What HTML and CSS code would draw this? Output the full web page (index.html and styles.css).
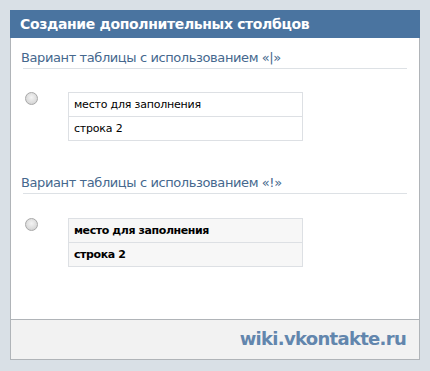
FILE: index.html
```html
<!DOCTYPE html>
<html lang="ru">
<head>
<meta charset="utf-8">
<link rel="stylesheet" href="styles.css">
</head>
<body>
<div class="panel">
  <div class="header">Создание дополнительных столбцов</div>
  <div class="content">
    <div class="section">
      <div class="heading">Вариант таблицы с использованием «|»</div>
      <div class="example">
        <span class="radio"></span>
        <table class="tbl">
          <tr><td>место для заполнения</td></tr>
          <tr><td>строка 2</td></tr>
        </table>
      </div>
    </div>
    <div class="section second">
      <div class="heading">Вариант таблицы с использованием «!»</div>
      <div class="example">
        <span class="radio"></span>
        <table class="tbl bold">
          <tr><td>место для заполнения</td></tr>
          <tr><td>строка 2</td></tr>
        </table>
      </div>
    </div>
  </div>
  <div class="footer">wiki.vkontakte.ru</div>
</div>
</body>
</html>
```
FILE: styles.css
```css
* { box-sizing: border-box; }
html, body { margin: 0; padding: 0; }
body {
  background: #d9e0e6;
  width: 430px;
  height: 371px;
  padding: 10px 0 0 10px;
  font-family: "DejaVu Sans", Verdana, sans-serif;
}
.panel {
  width: 410px;
}
.header {
  height: 28px;
  background: #4a74a0;
  color: #fff;
  font-weight: bold;
  font-size: 14px;
  line-height: 28px;
  padding-left: 10px;
  letter-spacing: -0.35px;
}
.content {
  background: #fff;
  height: 281px;
  border-left: 1px solid #b0b4b8;
  border-right: 1px solid #b0b4b8;
  padding: 10px 12px 0 10px;
}
.heading {
  color: #45688e;
  font-size: 13px;
  letter-spacing: -0.4px;
  height: 21px;
  line-height: 19px;
  border-bottom: 1px solid #dde1e5;
  margin-left: 2px;
  text-indent: -2px;
}
.example {
  display: flex;
  align-items: flex-start;
  padding-top: 23px;
}
.second { margin-top: 32px; }
.second .example { padding-top: 24px; }
.radio {
  width: 13px;
  height: 13px;
  border-radius: 50%;
  border: 1px solid #a8a8a8;
  background: radial-gradient(circle at 50% 40%, #f4f4f4 0%, #dcdcdc 60%, #c8c8c8 100%);
  margin-left: 4px;
  flex: none;
}
.tbl {
  margin-left: 30px;
  width: 235px;
  border-collapse: collapse;
  font-size: 11px;
  color: #000;
}
.tbl td {
  border: 1px solid #dde0e4;
  height: 24px;
  padding: 0 0 0 5px;
  letter-spacing: -0.2px;
}
.tbl.bold td {
  background: #f7f7f7;
  font-weight: bold;
  letter-spacing: -0.4px;
}
.footer {
  height: 41px;
  background: #f2f2f2;
  border: 1px solid #b0b4b8;
  color: #6286ad;
  font-weight: bold;
  font-size: 18px;
  text-align: right;
  padding-right: 13px;
  line-height: 38px;
  letter-spacing: -0.7px;
}
```
